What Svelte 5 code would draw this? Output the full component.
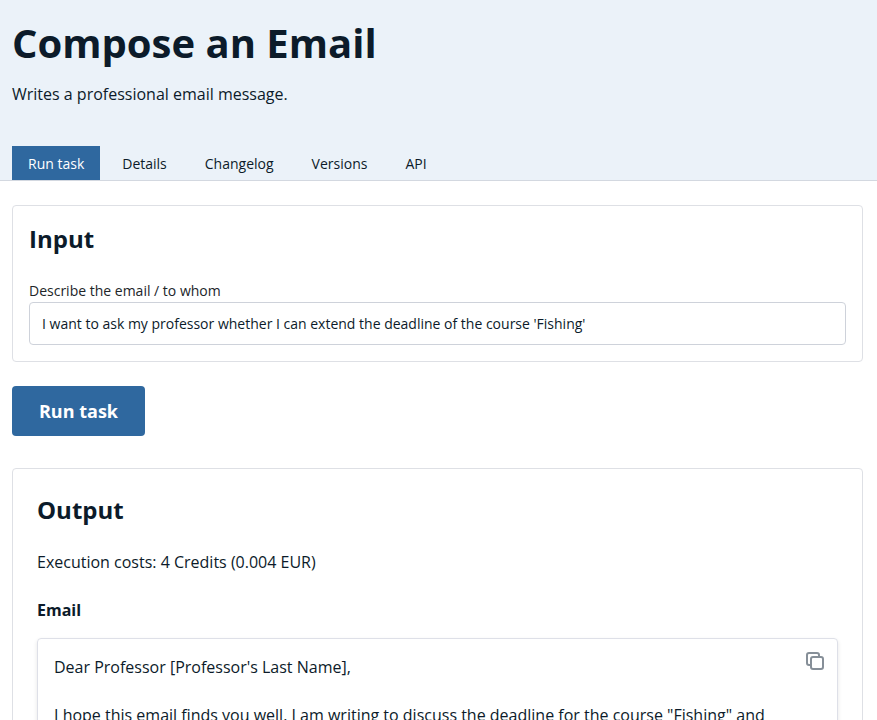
<script>
  const tabs = ['Run task', 'Details', 'Changelog', 'Versions', 'API'];
  let active = $state('Run task');
  let prompt = $state("I want to ask my professor whether I can extend the deadline of the course 'Fishing'");
</script>

<div class="page">
  <header>
    <h1>Compose an Email</h1>
    <p class="sub">Writes a professional email message.</p>
    <nav>
      {#each tabs as tab}
        <button class="tab" class:active={tab === active} onclick={() => (active = tab)}>{tab}</button>
      {/each}
    </nav>
  </header>
  <main>
    <section class="card input">
      <h2>Input</h2>
      <label for="desc">Describe the email / to whom</label>
      <input id="desc" bind:value={prompt} />
    </section>
    <button class="run">Run task</button>
    <section class="card output">
      <h2>Output</h2>
      <p class="cost">Execution costs: 4 Credits (0.004 EUR)</p>
      <h3>Email</h3>
      <div class="mail">
        <p>Dear Professor [Professor's Last Name],</p>
        <p>I hope this email finds you well. I am writing to discuss the deadline for the course "Fishing" and</p>
        <button class="copy" aria-label="Copy">
          <svg width="18" height="18" viewBox="0 0 18 18" fill="none" stroke="#868f98" stroke-width="2" stroke-linejoin="round">
            <rect x="5" y="5" width="12" height="12" rx="2" />
            <path d="M5 13H3a2 2 0 0 1-2-2V3a2 2 0 0 1 2-2h8a2 2 0 0 1 2 2v2" />
          </svg>
        </button>
      </div>
    </section>
  </main>
</div>

<style>
  :global(body) { margin: 0; }
  .page { height: 720px; overflow: hidden; background: #fff; color: #0c1b2a; font: 16px/24px "Open Sans", sans-serif; }
  .page * { box-sizing: border-box; }
  h1, h2, h3, p { margin: 0; }
  button, input { font-family: inherit; color: inherit; margin: 0; }
  header { height: 181px; padding: 16px 12px 0; background: #ebf2f9; border-bottom: 1px solid #d3d8e0; }
  h1 { font-size: 40px; line-height: 54px; font-weight: 700; }
  .sub { margin-top: 12px; }
  nav { display: flex; gap: 6px; margin-top: 40px; }
  .tab { height: 34px; padding: 2px 16px 0; border: 0; background: none; font-size: 14px; line-height: 32px; }
  .tab.active { background: #2f689f; color: #fff; }
  main { padding: 24px 14px 0 12px; }
  .card { border: 1px solid #dee0e5; border-radius: 4px; }
  .input { height: 157px; padding: 16px; }
  h2 { font-size: 24px; line-height: 34px; font-weight: 700; }
  label { display: block; margin-top: 24px; color: #212529; font-size: 14px; line-height: 22px; }
  input { display: block; width: 100%; height: 43px; padding: 0 12px; border: 1px solid #ced2da; border-radius: 4px; font-size: 14px; background: #fff; }
  .run { display: block; width: 133px; height: 50px; margin: 24px 0 32px; padding: 0; border: 0; border-radius: 4px; background: #2f689f; color: #fff; font-size: 18px; font-weight: 700; }
  .output { height: 500px; padding: 24px; }
  .cost { margin-top: 23px; }
  h3 { margin-top: 24px; font-size: 16px; font-weight: 700; }
  .mail { position: relative; height: 300px; margin-top: 16px; padding: 16px; border: 1px solid #dee0e8; border-radius: 4px; box-shadow: 0 2px 4px rgba(0, 0, 0, .1); }
  .mail p + p { margin-top: 24px; }
  .copy { position: absolute; top: 13px; right: 13px; width: 18px; height: 18px; padding: 0; border: 0; background: none; }
  .copy svg { display: block; }
</style>
